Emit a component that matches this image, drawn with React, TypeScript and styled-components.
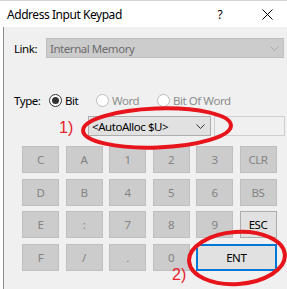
import styled, { createGlobalStyle } from 'styled-components';

const GlobalStyle = createGlobalStyle`
    html, body {
        margin: 0;
        padding: 0;
        background: #ffffff;
    }
    * {
        box-sizing: border-box;
    }
`;

const FONT = `"Noto Sans", "Open Sans", sans-serif`;

const StyledWindow = styled.div`
    position: relative;
    width: 287px;
    height: 289px;
    overflow: hidden;
    display: flex;
    flex-direction: column;
    font-family: ${FONT};
    font-size: 11.5px;
    letter-spacing: -0.45px;
    background: #ffffff;
    border-top: 1px solid #d4d4d4;
`;

const StyledTitleBar = styled.div`
    height: 26px;
    flex-shrink: 0;
    display: flex;
    align-items: center;
    padding-left: 7px;
    background: #ffffff;
    color: #000000;
`;

const StyledTitle = styled.div`
    flex: 1;
    font-size: 12px;
`;

const StyledTitleButton = styled.div<{ width: number; right?: number }>`
    width: ${({ width }) => width}px;
    margin-right: ${({ right }) => right || 0}px;
    display: flex;
    justify-content: center;
    align-items: center;
    color: #000000;
    font-size: 12px;
`;

const StyledBody = styled.div`
    flex: 1;
    margin-left: 3px;
    border-left: 1px solid #8c8c8c;
    background: #f0f0f0;
    display: flex;
    flex-direction: column;
    padding-top: 11px;
`;

const StyledRow = styled.div<{ pad: number; top?: number }>`
    display: flex;
    align-items: center;
    padding-left: ${({ pad }) => pad}px;
    margin-top: ${({ top }) => top || 0}px;
`;

const StyledLabel = styled.div<{ width: number }>`
    width: ${({ width }) => width}px;
    flex-shrink: 0;
    color: #000000;
`;

const StyledDisabledCombo = styled.div`
    width: 238px;
    height: 20px;
    background: #cccccc;
    border: 1px solid #bfbfbf;
    display: flex;
    align-items: center;
    justify-content: space-between;
    padding: 0 4px 0 3px;
    color: #6d6d6d;
`;

const StyledCombo = styled.div`
    width: 123px;
    height: 20px;
    background: #e1e1e1;
    border: 1px solid #adadad;
    display: flex;
    align-items: center;
    justify-content: space-between;
    padding: 0 5px 0 3px;
    color: #000000;
`;

const StyledEdit = styled.div`
    width: 71px;
    height: 20px;
    margin-left: 3px;
    background: #f0f0f0;
    border: 1px solid #cfcfcf;
`;

const StyledRadio = styled.div<{ disabled?: boolean; width?: number }>`
    width: ${({ width }) => (width ? `${width}px` : 'auto')};
    flex-shrink: 0;
    display: flex;
    align-items: center;
    gap: 3px;
    color: ${({ disabled }) => (disabled ? '#8d8d8d' : '#000000')};
`;

const StyledRadioCircle = styled.span<{ checked?: boolean; disabled?: boolean }>`
    width: 13px;
    height: 13px;
    flex-shrink: 0;
    border-radius: 50%;
    border: 1px solid ${({ disabled }) => (disabled ? '#bcbcbc' : '#333333')};
    background: #ffffff;
    display: flex;
    align-items: center;
    justify-content: center;
    &::after {
        content: '';
        display: ${({ checked }) => (checked ? 'block' : 'none')};
        width: 7px;
        height: 7px;
        border-radius: 50%;
        background: #333333;
    }
`;

const StyledKeypad = styled.div`
    display: grid;
    grid-template-columns: repeat(6, 37px);
    grid-auto-rows: 27px;
    column-gap: 6.5px;
    row-gap: 5.7px;
    padding-left: 18px;
    margin-top: 10px;
`;

const StyledKey = styled.div<{ variant: 'disabled' | 'normal' | 'default'; span?: number }>`
    grid-column: span ${({ span }) => span || 1};
    display: flex;
    align-items: center;
    justify-content: center;
    background: ${({ variant }) => (variant === 'disabled' ? '#cccccc' : '#e1e1e1')};
    border: ${({ variant }) =>
        variant === 'default' ? '2px solid #0078d7' : variant === 'normal' ? '1px solid #adadad' : '1px solid #bfbfbf'};
    color: ${({ variant }) => (variant === 'disabled' ? '#838383' : '#000000')};
`;

const StyledNote = styled.div<{ x: number; y: number }>`
    position: absolute;
    left: ${({ x }) => x}px;
    top: ${({ y }) => y}px;
    color: #e8202a;
    font-family: "Liberation Sans", Arial, sans-serif;
    font-size: 16px;
    letter-spacing: 0;
    line-height: 1;
`;

const StyledOverlay = styled.svg`
    position: absolute;
    left: 0;
    top: 0;
    pointer-events: none;
`;

const Chevron = ({ color }: { color: string }) => (
    <svg width="9" height="5" viewBox="0 0 9 5">
        <path d="M0.5 0.5 L4.5 4.5 L8.5 0.5" fill="none" stroke={color} strokeWidth="1" />
    </svg>
);

const keys: { label: string; variant?: 'normal' | 'default'; span?: number }[] = [
    { label: 'C' }, { label: 'A' }, { label: '1' }, { label: '2' }, { label: '3' }, { label: 'CLR' },
    { label: 'D' }, { label: 'B' }, { label: '4' }, { label: '5' }, { label: '6' }, { label: 'BS' },
    { label: 'E' }, { label: ':' }, { label: '7' }, { label: '8' }, { label: '9' }, { label: 'ESC', variant: 'normal' },
    { label: 'F' }, { label: '/' }, { label: '.' }, { label: '0' }, { label: 'ENT', variant: 'default', span: 2 },
];

export default function App() {
    return (
        <>
            <GlobalStyle />
            <StyledWindow>
                <StyledTitleBar>
                    <StyledTitle>Address Input Keypad</StyledTitle>
                    <StyledTitleButton width={14} right={20}>?</StyledTitleButton>
                    <StyledTitleButton width={40}>
                        <svg width="11" height="11" viewBox="0 0 11 11">
                            <path d="M0.5 0.5 L10.5 10.5 M10.5 0.5 L0.5 10.5" stroke="#000" strokeWidth="1" />
                        </svg>
                    </StyledTitleButton>
                </StyledTitleBar>
                <StyledBody>
                    <StyledRow pad={10}>
                        <StyledLabel width={32}>Link:</StyledLabel>
                        <StyledDisabledCombo>
                            <span>Internal Memory</span>
                            <Chevron color="#a8a8a8" />
                        </StyledDisabledCombo>
                    </StyledRow>
                    <StyledRow pad={10} top={35}>
                        <StyledLabel width={35}>Type:</StyledLabel>
                        <StyledRadio width={47}>
                            <StyledRadioCircle checked />
                            Bit
                        </StyledRadio>
                        <StyledRadio disabled width={61}>
                            <StyledRadioCircle disabled />
                            Word
                        </StyledRadio>
                        <StyledRadio disabled>
                            <StyledRadioCircle disabled />
                            Bit Of Word
                        </StyledRadio>
                    </StyledRow>
                    <StyledRow pad={84} top={8}>
                        <StyledCombo>
                            <span>&lt;AutoAlloc $U&gt;</span>
                            <Chevron color="#333333" />
                        </StyledCombo>
                        <StyledEdit />
                    </StyledRow>
                    <StyledKeypad>
                        {keys.map((k) => (
                            <StyledKey key={k.label} variant={k.variant || 'disabled'} span={k.span}>
                                {k.label}
                            </StyledKey>
                        ))}
                    </StyledKeypad>
                </StyledBody>
                <StyledNote x={59} y={119}>1)</StyledNote>
                <StyledNote x={172} y={266}>2)</StyledNote>
                <StyledOverlay width="287" height="289">
                    <ellipse cx="157" cy="127" rx="74" ry="19.5" fill="none" stroke="#e8141c" strokeWidth="4" transform="rotate(-2 157 127)" />
                    <ellipse cx="237" cy="257" rx="48" ry="26" fill="none" stroke="#e8141c" strokeWidth="4" transform="rotate(-4 237 257)" />
                </StyledOverlay>
            </StyledWindow>
        </>
    );
}
